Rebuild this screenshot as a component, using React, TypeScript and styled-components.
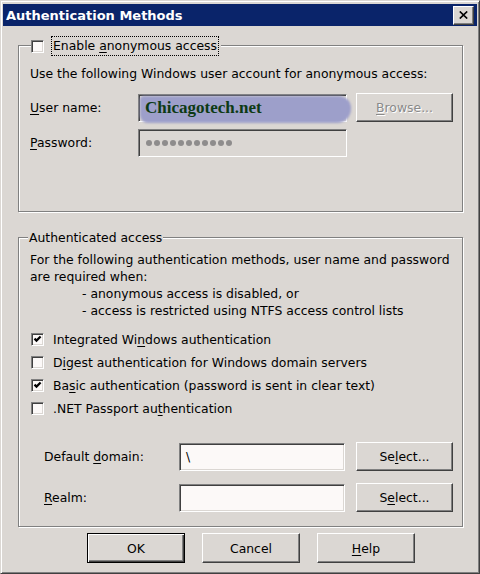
import React from "react";
import styled, { createGlobalStyle, css } from "styled-components";

const FACE = "#dbd7d3";

const GlobalStyle = createGlobalStyle`
  html, body { margin: 0; padding: 0; background: ${FACE}; }
  body { font-family: "DejaVu Sans", "Liberation Sans", sans-serif; font-size: 12.4px; color: #000; }
  * { box-sizing: border-box; }
`;

const Window = styled.div`
  width: 480px;
  height: 574px;
  background: ${FACE};
  border-top: 1px solid ${FACE};
  border-left: 1px solid ${FACE};
  border-right: 1px solid #404040;
  border-bottom: 1px solid #404040;
  box-shadow: inset 1px 1px 0 #fff, inset -1px -1px 0 #808080;
  padding: 3px 2px 2px 2px;
  display: flex;
  flex-direction: column;
`;

const TitleBar = styled.div`
  height: 22px;
  background: #0a246a;
  display: flex;
  align-items: center;
  justify-content: space-between;
  padding: 0 3px 0 3px;
`;

const Title = styled.div`
  color: #fff;
  font-weight: bold;
  font-size: 13px;
  letter-spacing: 0;
`;

const CloseButton = styled.div`
  width: 21px;
  height: 19px;
  background: ${FACE};
  border: 1px solid;
  border-color: #fff #404040 #404040 #fff;
  box-shadow: inset -1px -1px 0 #808080;
  display: flex;
  align-items: center;
  justify-content: center;
`;

const Body = styled.div`
  display: flex;
  flex-direction: column;
  padding: 0 14px 0 15px;
`;

const Group = styled.div<{ $top: number; $bottom: number }>`
  margin-top: ${(p) => p.$top}px;
  border: 1px solid #808080;
  box-shadow: inset 1px 1px 0 #fff, 1px 1px 0 #fff;
  padding: 0 8px ${(p) => p.$bottom}px 11px;
  display: flex;
  flex-direction: column;
`;

const CheckLegend = styled.div`
  margin-top: -10px;
  margin-left: 1px;
  height: 20px;
  align-self: flex-start;
  display: flex;
  align-items: center;
  background: ${FACE};
  padding-right: 2px;
`;

const TextLegend = styled.div`
  margin-top: -8px;
  margin-left: -2px;
  height: 16px;
  line-height: 16px;
  align-self: flex-start;
  background: ${FACE};
  padding: 0 1px;
`;

const FocusLabel = styled.span`
  margin-left: 7px;
  height: 20px;
  line-height: 18px;
  padding: 0 1px;
  border: 1px dotted #000;
`;

const Text = styled.div<{ $top?: number; $lh?: number; $indent?: number }>`
  margin-top: ${(p) => p.$top ?? 0}px;
  line-height: ${(p) => p.$lh ?? 16}px;
  padding-left: ${(p) => p.$indent ?? 0}px;
  white-space: nowrap;
`;

const Key = styled.span`
  text-decoration: underline;
  text-underline-offset: 2px;
`;

const Sunken = css`
  border: 1px solid;
  border-color: #808080 #fff #fff #808080;
  box-shadow: inset 1px 1px 0 #404040, inset -1px -1px 0 ${FACE};
`;

const Box = styled.span`
  ${Sunken};
  width: 13px;
  height: 13px;
  flex: none;
  background: #fcf9f8;
  display: block;
  position: relative;
`;

const Mark = styled.svg`
  position: absolute;
  left: -1px;
  top: -1px;
`;

const CheckBox = ({ checked }: { checked?: boolean }) => (
  <Box>
    {checked && (
      <Mark width="13" height="13" viewBox="0 0 13 13">
        <polyline points="3.5,5.6 5.5,7.6 9.6,3.5" fill="none" stroke="#000" strokeWidth="2.2" />
      </Mark>
    )}
  </Box>
);

const FormGrid = styled.div<{ $cols: string; $top: number; $gap: number; $rowGap: number; $indent?: number }>`
  margin-top: ${(p) => p.$top}px;
  padding-left: ${(p) => p.$indent ?? 0}px;
  display: grid;
  grid-template-columns: ${(p) => p.$cols};
  grid-auto-rows: 29px;
  row-gap: ${(p) => p.$rowGap}px;
  align-items: center;
  & > button { margin-left: ${(p) => p.$gap}px; }
`;

const Label = styled.div`
  white-space: nowrap;
`;

const Field = styled.div<{ $disabled?: boolean }>`
  ${Sunken};
  height: 28px;
  background: ${(p) => (p.$disabled ? FACE : "#fcf9f8")};
  display: flex;
  align-items: center;
  position: relative;
  padding-left: 6px;
`;

const Scribble = styled.span`
  position: absolute;
  left: 1px;
  top: 1px;
  right: -5px;
  bottom: -2px;
  background: #9d9fca;
  border-radius: 4px 12px 14px 8px;
  filter: blur(1.2px);
`;

const Brand = styled.span`
  position: relative;
  font-family: "Liberation Serif", serif;
  font-weight: bold;
  font-size: 17px;
  color: #0d3a14;
`;

const Dots = styled.div`
  display: flex;
  gap: 2px;
  padding-left: 1px;
`;

const Dot = styled.span`
  width: 6px;
  height: 6px;
  border-radius: 50%;
  background: #8e8c8c;
`;

const Button = styled.button<{ $primary?: boolean; $disabled?: boolean }>`
  font: inherit;
  color: ${(p) => (p.$disabled ? "#8a8a8a" : "#000")};
  text-shadow: ${(p) => (p.$disabled ? "1px 1px 0 #fff" : "none")};
  background: ${FACE};
  height: 29px;
  width: 97px;
  padding: 0;
  display: flex;
  align-items: center;
  justify-content: center;
  ${(p) =>
    p.$primary
      ? css`
          border: 1px solid #000;
          box-shadow: inset 1px 1px 0 #fff, inset -1px -1px 0 #404040, inset -2px -2px 0 #808080;
        `
      : css`
          border: 1px solid;
          border-color: #fff #404040 #404040 #fff;
          box-shadow: inset -1px -1px 0 #808080;
        `}
`;

const Checks = styled.div`
  margin-top: 9px;
  display: flex;
  flex-direction: column;
`;

const CheckRow = styled.div`
  height: 23px;
  display: flex;
  align-items: center;
  padding-left: 1px;
  gap: 9px;
  white-space: nowrap;
`;

const ButtonRow = styled.div`
  margin-top: 6px;
  padding-left: 69px;
  display: flex;
  gap: 17px;
  & > button { width: 98px; height: 30px; }
`;

export default function App() {
  return (
    <>
      <GlobalStyle />
      <Window>
        <TitleBar>
          <Title>Authentication Methods</Title>
          <CloseButton>
            <svg width="9" height="8" viewBox="0 0 9 8">
              <path d="M0.8 0.5 L8.2 7.5 M8.2 0.5 L0.8 7.5" stroke="#000" strokeWidth="1.7" />
            </svg>
          </CloseButton>
        </TitleBar>
        <Body>
          <Group $top={19} $bottom={54}>
            <CheckLegend>
              <CheckBox />
              <FocusLabel>
                Enable <Key>a</Key>nonymous access
              </FocusLabel>
            </CheckLegend>
            <Text $top={10}>Use the following Windows user account for anonymous access:</Text>
            <FormGrid $cols="108px 209px 106px" $top={11} $gap={9} $rowGap={6}>
              <Label>
                <Key>U</Key>ser name:
              </Label>
              <Field $disabled>
                <Scribble />
                <Brand>Chicagotech.net</Brand>
              </Field>
              <Button $disabled>
                <Key>B</Key>rowse...
              </Button>
              <Label>
                <Key>P</Key>assword:
              </Label>
              <Field $disabled>
                <Dots>
                  {Array.from({ length: 11 }).map((_, i) => (
                    <Dot key={i} />
                  ))}
                </Dots>
              </Field>
            </FormGrid>
          </Group>

          <Group $top={25} $bottom={14}>
            <TextLegend>Authenticated access</TextLegend>
            <Text $top={5} $lh={17}>For the following authentication methods, user name and password</Text>
            <Text $lh={17}>are required when:</Text>
            <Text $lh={17} $indent={52}>- anonymous access is disabled, or</Text>
            <Text $lh={17} $indent={52}>- access is restricted using NTFS access control lists</Text>
            <Checks>
              <CheckRow>
                <CheckBox checked />
                <span>
                  Integrated Wi<Key>n</Key>dows authentication
                </span>
              </CheckRow>
              <CheckRow>
                <CheckBox />
                <span>
                  D<Key>i</Key>gest authentication for Windows domain servers
                </span>
              </CheckRow>
              <CheckRow>
                <CheckBox checked />
                <span>
                  Ba<Key>s</Key>ic authentication (password is sent in clear text)
                </span>
              </CheckRow>
              <CheckRow>
                <CheckBox />
                <span>
                  .NET Passport au<Key>t</Key>hentication
                </span>
              </CheckRow>
            </Checks>
            <FormGrid $cols="135px 166px 108px" $top={22} $gap={11} $rowGap={12} $indent={14}>
              <Label>
                Default <Key>d</Key>omain:
              </Label>
              <Field>\</Field>
              <Button>
                Se<Key>l</Key>ect...
              </Button>
              <Label>
                <Key>R</Key>ealm:
              </Label>
              <Field />
              <Button>
                S<Key>e</Key>lect...
              </Button>
            </FormGrid>
          </Group>

          <ButtonRow>
            <Button $primary>OK</Button>
            <Button>Cancel</Button>
            <Button>
              <Key>H</Key>elp
            </Button>
          </ButtonRow>
        </Body>
      </Window>
    </>
  );
}
